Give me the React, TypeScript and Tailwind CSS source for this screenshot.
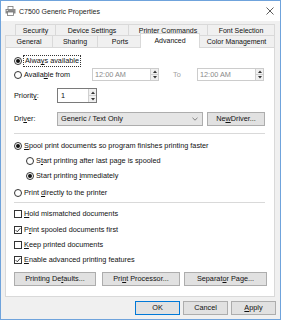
import React from "react";

const U = ({ c }: { c: string }) => <span className="underline underline-offset-1">{c}</span>;

function Radio({ checked }: { checked?: boolean }) {
  return (
    <span className="w-[8px] h-[8px] rounded-full border border-[#333] bg-white flex items-center justify-center shrink-0">
      {checked && <span className="w-[4px] h-[4px] rounded-full bg-[#111]" />}
    </span>
  );
}

function Check({ checked }: { checked?: boolean }) {
  return (
    <span className="w-[8px] h-[8px] border border-[#333] bg-white flex items-center justify-center shrink-0">
      {checked && (
        <svg width="6" height="6" viewBox="0 0 6 6">
          <path d="M0.6 3.1 L2.3 4.8 L5.4 1.1" fill="none" stroke="#222" strokeWidth="0.9" />
        </svg>
      )}
    </span>
  );
}

function Spin({ h }: { h: number }) {
  return (
    <div className="w-[8px] flex flex-col border-l border-[#d0d0d0] bg-[#f0f0f0] shrink-0" style={{ height: h }}>
      <div className="flex-1 flex items-center justify-center border-b border-[#d0d0d0]">
        <svg width="4" height="3" viewBox="0 0 4 3"><path d="M0 3 L2 0.5 L4 3 Z" fill="#333" /></svg>
      </div>
      <div className="flex-1 flex items-center justify-center">
        <svg width="4" height="3" viewBox="0 0 4 3"><path d="M0 0 L4 0 L2 2.5 Z" fill="#333" /></svg>
      </div>
    </div>
  );
}

function Btn({ w, children, def }: { w: number; children: React.ReactNode; def?: boolean }) {
  return (
    <div
      className={`h-[14px] flex items-center justify-center bg-[#e1e1e1] border ${def ? "border-[#0078d7]" : "border-[#adadad]"} text-[#111] shrink-0`}
      style={{ width: w }}
    >
      {children}
    </div>
  );
}

function TimeBox() {
  return (
    <div className="w-[67px] h-[13px] border border-[#cccccc] bg-white flex items-center justify-between">
      <span className="pl-[2px] text-[#8a8a8a]">12:00 AM</span>
      <Spin h={11} />
    </div>
  );
}

export default function App() {
  return (
    <div className="w-[281px] h-[320px] bg-[#f0f0f0] border border-[#6fa3dc] font-['Liberation_Sans',Arial,sans-serif] text-[7.3px] leading-none text-[#111] flex flex-col overflow-hidden">
      {/* Title bar */}
      <div className="h-[20px] bg-white flex items-center shrink-0 text-[7px]">
        <svg className="ml-[4px]" width="11" height="10" viewBox="0 0 11 10">
          <rect x="3" y="0.5" width="5" height="3" fill="#fff" stroke="#777" strokeWidth="0.8" />
          <rect x="0.5" y="3" width="10" height="4.5" fill="#8a8a8a" />
          <rect x="2.5" y="6" width="6" height="3.5" fill="#fff" stroke="#777" strokeWidth="0.8" />
          <rect x="1.5" y="4" width="1.5" height="1" fill="#ddd" />
        </svg>
        <span className="ml-[3px] text-[#222]">C7500 Generic Properties</span>
        <svg className="ml-auto mr-[6px]" width="8" height="8" viewBox="0 0 8 8">
          <path d="M0.5 0.5 L7.5 7.5 M7.5 0.5 L0.5 7.5" stroke="#333" strokeWidth="0.8" />
        </svg>
      </div>

      {/* Tabs row 1 */}
      <div className="mt-[3px] ml-[14px] flex h-[11px] text-[7px]">
        {[
          ["Security", 40],
          ["Device Settings", 73],
          ["Printer Commands", 79],
          ["Font Selection", 68],
        ].map(([t, w], i) => (
          <div
            key={t as string}
            className={`border-t border-l ${i === 3 ? "border-r" : ""} border-[#d9d9d9] flex items-center justify-center`}
            style={{ width: w as number }}
          >
            {t}
          </div>
        ))}
      </div>
      {/* Tabs row 2 */}
      <div className="ml-[4px] flex items-end h-[12px] text-[7px]">
        <div className="w-[47px] h-[12px] border-t border-l border-[#d9d9d9] flex items-center justify-center">General</div>
        <div className="w-[45px] h-[12px] border-t border-l border-[#d9d9d9] flex items-center justify-center">Sharing</div>
        <div className="w-[45px] h-[12px] border-t border-l border-[#d9d9d9] flex items-center justify-center">Ports</div>
        <div className="relative z-10 w-[60px] h-[15px] -mx-[2px] -mb-px bg-white border-t border-x border-[#d9d9d9] flex items-start pt-[3px] justify-center">Advanced</div>
        <div className="w-[77px] h-[12px] border-t border-x border-[#d9d9d9] flex items-center justify-center">Color Management</div>
      </div>

      {/* Panel */}
      <div className="ml-[4px] w-[270px] h-[250px] bg-white border border-[#d9d9d9] pl-[8px] flex flex-col shrink-0">
        <div className="mt-[6px] h-[14px] flex items-center gap-[2px]">
          <Radio checked />
          <span className="outline outline-1 outline-dotted outline-[#333] px-[1px] py-[1px]">Alwa<U c="y" />s available</span>
        </div>
        <div className="h-[13px] grid grid-cols-[78px_67px_38px_67px] items-center">
          <div className="flex items-center gap-[2px]">
            <Radio />
            <span>Availa<U c="b" />le from</span>
          </div>
          <TimeBox />
          <span className="pl-[14px] text-[#a0a0a0]">To</span>
          <TimeBox />
        </div>
        <div className="mt-[7px] h-[15px] flex items-center">
          <span className="w-[43px] shrink-0">Priorit<U c="y" />:</span>
          <div className="w-[40px] h-[15px] border border-[#7a7a7a] bg-white flex items-center justify-between">
            <span className="pl-[3px]">1</span>
            <Spin h={13} />
          </div>
        </div>
        <div className="mt-[9px] h-[14px] flex items-center">
          <span className="w-[43px] shrink-0">Dri<U c="v" />er:</span>
          <div className="w-[146px] shrink-0 h-[14px] border border-[#adadad] bg-[#e5e5e5] flex items-center">
            <span className="pl-[3px]">Generic / Text Only</span>
            <svg className="ml-auto mr-[4px]" width="6" height="4" viewBox="0 0 6 4">
              <path d="M0.5 0.8 L3 3.2 L5.5 0.8" fill="none" stroke="#666" strokeWidth="0.8" />
            </svg>
          </div>
          <div className="ml-[4px]">
            <Btn w={58}>Ne<U c="w" /> Driver...</Btn>
          </div>
        </div>
        <div className="mt-[7px] w-[251px] h-px bg-[#d9d9d9]" />
        <div className="mt-[5px] h-[14px] flex items-center gap-[2px]">
          <Radio checked />
          <span><U c="S" />pool print documents so program finishes printing faster</span>
        </div>
        <div className="mt-[1px] ml-[12px] h-[14px] flex items-center gap-[2px]">
          <Radio />
          <span>S<U c="t" />art printing after last page is spooled</span>
        </div>
        <div className="mt-[1px] ml-[12px] h-[14px] flex items-center gap-[2px]">
          <Radio checked />
          <span>Start printing <U c="i" />mmediately</span>
        </div>
        <div className="mt-[3px] h-[14px] flex items-center gap-[2px]">
          <Radio />
          <span>Print <U c="d" />irectly to the printer</span>
        </div>
        <div className="mt-[2px] w-[251px] h-px bg-[#d9d9d9]" />
        <div className="mt-[4px] h-[14px] flex items-center gap-[2px]">
          <Check />
          <span><U c="H" />old mismatched documents</span>
        </div>
        <div className="mt-[2px] h-[14px] flex items-center gap-[2px]">
          <Check checked />
          <span>P<U c="r" />int spooled documents first</span>
        </div>
        <div className="mt-[1px] h-[14px] flex items-center gap-[2px]">
          <Check />
          <span><U c="K" />eep printed documents</span>
        </div>
        <div className="mt-[1px] h-[14px] flex items-center gap-[2px]">
          <Check checked />
          <span><U c="E" />nable advanced printing features</span>
        </div>
        <div className="mt-[5px] flex">
          <Btn w={82}>Printing De<U c="f" />aults...</Btn>
          <div className="ml-[6px]">
            <Btn w={78}>Pri<U c="n" />t Processor...</Btn>
          </div>
          <div className="ml-[4px]">
            <Btn w={83}>Separat<U c="o" />r Page...</Btn>
          </div>
        </div>
      </div>

      {/* Dialog buttons */}
      <div className="mt-[4px] flex justify-end pr-[4px] gap-[3px]">
        <Btn w={45} def>OK</Btn>
        <Btn w={45}>Cancel</Btn>
        <Btn w={45}><U c="A" />pply</Btn>
      </div>
    </div>
  );
}
